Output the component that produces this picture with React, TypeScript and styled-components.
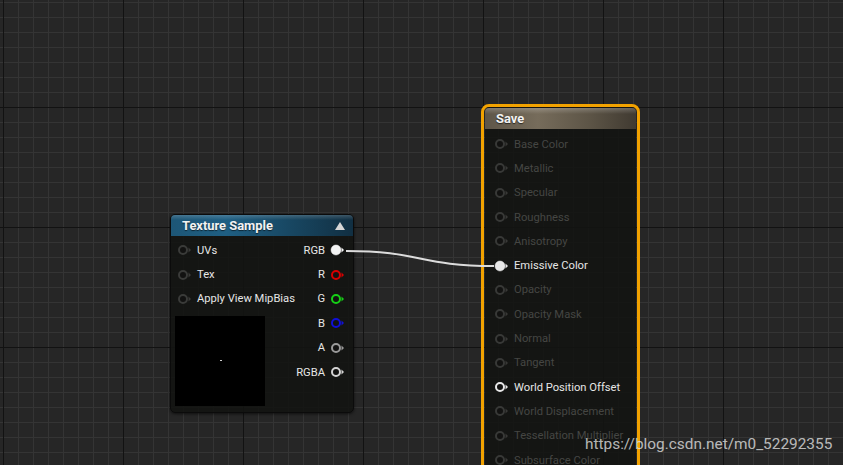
import React from 'react';
import styled, { createGlobalStyle } from 'styled-components';

const GlobalStyle = createGlobalStyle`
  html, body {
    margin: 0;
    padding: 0;
    background: #262626;
    font-family: Roboto, "Noto Sans", "DejaVu Sans", sans-serif;
  }
`;

const Canvas = styled.div`
  position: relative;
  width: 843px;
  height: 465px;
  overflow: hidden;
  background-color: #262626;
  background-image: linear-gradient(to right, #121212 1px, transparent 1px),
    linear-gradient(to bottom, #121212 1px, transparent 1px),
    linear-gradient(to right, #343434 1px, transparent 1px),
    linear-gradient(to bottom, #343434 1px, transparent 1px);
  background-size: 120px 100%, 100% 120px, 15px 100%, 100% 15px;
  background-position: 3px 0, 0 107px, 3px 0, 0 2px;
`;

const Wires = styled.svg`
  position: absolute;
  left: 0;
  top: 0;
  pointer-events: none;
`;

const Node = styled.div<{ x: number; y: number; w: number }>`
  position: absolute;
  left: ${({ x }) => x}px;
  top: ${({ y }) => y}px;
  width: ${({ w }) => w}px;
  box-sizing: border-box;
  background: rgba(19, 20, 18, 0.9);
  border: 1px solid #0b0b0b;
  border-radius: 5px;
  box-shadow: 0 1px 3px rgba(0, 0, 0, 0.6);
`;

const Selection = styled.div<{ x: number; y: number; w: number }>`
  position: absolute;
  left: ${({ x }) => x}px;
  top: ${({ y }) => y}px;
  width: ${({ w }) => w}px;
  box-sizing: border-box;
  border: 3px solid #f2a200;
  border-radius: 8px;
  padding: 1px;
`;

const SaveBody = styled.div`
  background: rgba(19, 20, 18, 0.9);
  border-radius: 5px;
  height: 420px;
`;

const Header = styled.div<{ tone: 'blue' | 'brown' }>`
  height: 21px;
  display: flex;
  align-items: center;
  justify-content: space-between;
  padding: 0 8px 0 11px;
  border-radius: 4px 4px 0 0;
  color: #f2f2f2;
  font-size: 12.9px;
  font-weight: 700;
  background: ${({ tone }) =>
    tone === 'blue'
      ? 'linear-gradient(to bottom, rgba(255,255,255,0.18) 0px, rgba(255,255,255,0) 5px), linear-gradient(to right, #1d5676 0%, #1f5f83 30%, #17445e 70%, #112f42 100%)'
      : 'linear-gradient(to bottom, rgba(255,255,255,0.22) 0px, rgba(255,255,255,0) 6px), linear-gradient(to right, #5e5649 0%, #766c5b 35%, #5c5446 70%, #403a31 100%)'};
  text-shadow: 0 1px 1px rgba(0, 0, 0, 0.6);
`;

const Collapse = styled.span`
  width: 0;
  height: 0;
  border-left: 5px solid transparent;
  border-right: 5px solid transparent;
  border-bottom: 8px solid #d6d6d6;
`;

const TexBody = styled.div`
  display: flex;
  justify-content: space-between;
  padding: 2px 0 6px 0;
`;

const Column = styled.div<{ align: 'left' | 'right' }>`
  display: flex;
  flex-direction: column;
  align-items: ${({ align }) => (align === 'left' ? 'flex-start' : 'flex-end')};
`;

const PinRow = styled.div<{ h?: number }>`
  height: ${({ h }) => h ?? 24.4}px;
  display: flex;
  align-items: center;
  gap: 5px;
  font-size: 11.2px;
`;

const Label = styled.span<{ dim?: boolean }>`
  color: ${({ dim }) => (dim ? '#454643' : '#e6e6e6')};
  white-space: nowrap;
`;

const Preview = styled.div`
  position: relative;
  width: 90px;
  height: 90px;
  margin: 5px 0 0 4px;
  background: #000;
`;

const Speck = styled.span`
  position: absolute;
  left: 45px;
  top: 44px;
  width: 2px;
  height: 1px;
  background: #cfcfcf;
`;

const SaveRows = styled.div`
  display: flex;
  flex-direction: column;
  padding: 3px 0 0 9px;
`;

const Watermark = styled.div`
  position: absolute;
  left: 585px;
  top: 435px;
  font-size: 15.4px;
  color: rgba(225, 225, 225, 0.8);
  font-family: Roboto, "Liberation Sans", sans-serif;
  white-space: nowrap;
`;

const Pin = ({ color = '#3a3b39', filled = false, gapRight = 0, gapLeft = 0 }: { color?: string; filled?: boolean; gapRight?: number; gapLeft?: number }) => (
  <svg width="15" height="12" viewBox="0 0 15 12" style={{ marginLeft: gapLeft, marginRight: gapRight }}>
    <circle cx="6" cy="6" r={filled ? 5 : 4} fill={filled ? color : '#121211'} stroke={color} strokeWidth={filled ? 0.5 : 2} />
    <polygon points="11.5,3.5 14,6 11.5,8.5" fill={color} />
  </svg>
);

const texInputs = ['UVs', 'Tex', 'Apply View MipBias'];

const texOutputs: { name: string; color: string; filled?: boolean }[] = [
  { name: 'RGB', color: '#f4f4f4', filled: true },
  { name: 'R', color: '#d80000' },
  { name: 'G', color: '#16d016' },
  { name: 'B', color: '#1010d8' },
  { name: 'A', color: '#9a9a9a' },
  { name: 'RGBA', color: '#d4d4d4' },
];

const saveInputs: { name: string; active?: boolean; filled?: boolean }[] = [
  { name: 'Base Color' },
  { name: 'Metallic' },
  { name: 'Specular' },
  { name: 'Roughness' },
  { name: 'Anisotropy' },
  { name: 'Emissive Color', active: true, filled: true },
  { name: 'Opacity' },
  { name: 'Opacity Mask' },
  { name: 'Normal' },
  { name: 'Tangent' },
  { name: 'World Position Offset', active: true },
  { name: 'World Displacement' },
  { name: 'Tessellation Multiplier' },
  { name: 'Subsurface Color' },
];

export default function App() {
  return (
    <>
      <GlobalStyle />
      <Canvas>
        <Node x={170} y={214} w={184}>
          <Header tone="blue">
            Texture Sample
            <Collapse />
          </Header>
          <TexBody>
            <Column align="left">
              {texInputs.map((name) => (
                <PinRow key={name}>
                  <Pin gapLeft={6} />
                  <Label>{name}</Label>
                </PinRow>
              ))}
              <Preview>
                <Speck />
              </Preview>
            </Column>
            <Column align="right">
              {texOutputs.map((o) => (
                <PinRow key={o.name}>
                  <Label>{o.name}</Label>
                  <Pin gapRight={8} color={o.color} filled={o.filled} />
                </PinRow>
              ))}
            </Column>
          </TexBody>
        </Node>

        <Selection x={481} y={104} w={159}>
          <SaveBody>
            <Header tone="brown">Save</Header>
            <SaveRows>
              {saveInputs.map((s) => (
                <PinRow key={s.name} h={24.3}>
                  <Pin color={s.active ? '#e8e8e8' : '#383937'} filled={s.filled} />
                  <Label dim={!s.active}>{s.name}</Label>
                </PinRow>
              ))}
            </SaveRows>
          </SaveBody>
        </Selection>

        <Wires width="843" height="465">
          <path d="M 346 251 C 420 251, 420 266, 494 266" stroke="#dcdcdc" strokeWidth="2" fill="none" />
        </Wires>

        <Watermark>https://blog.csdn.net/m0_52292355</Watermark>
      </Canvas>
    </>
  );
}
